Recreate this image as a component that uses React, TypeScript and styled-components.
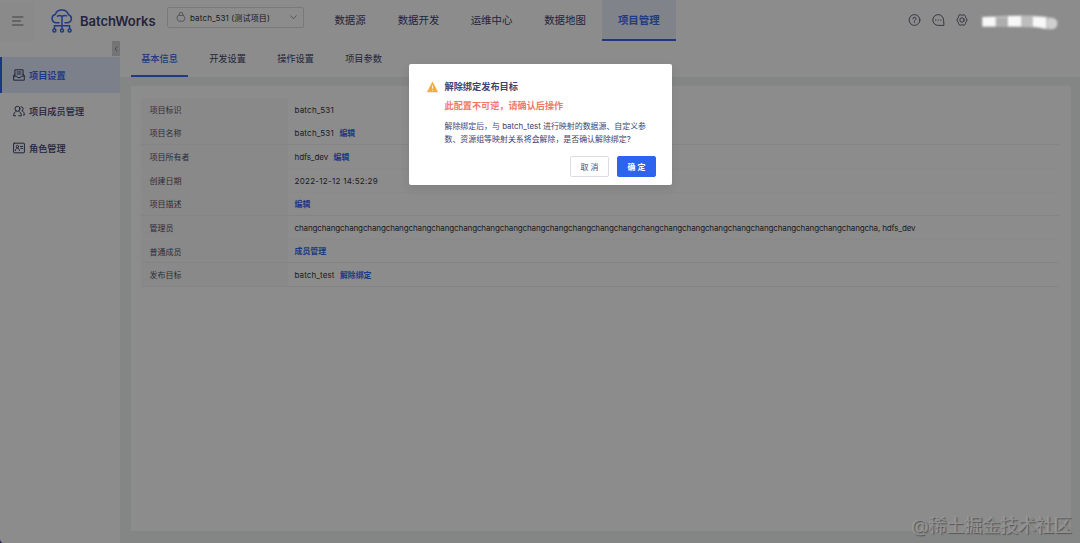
import React from 'react';
import styled, { createGlobalStyle, css } from 'styled-components';

const Global = createGlobalStyle`
  * { box-sizing: border-box; }
  html, body, #root { margin: 0; height: 100%; }
  body { overflow: hidden; font-family: Inter, "Noto Sans CJK SC", sans-serif; font-size: 8px; color: #3d4370; background: #fff; }
`;

const Page = styled.div`
  height: 543px;
  width: 1080px;
  display: flex;
  flex-direction: column;
`;
const Header = styled.header`
  height: 41px;
  flex: none;
  display: flex;
  align-items: center;
  background: #fff;
`;
const MenuToggle = styled.div`
  width: 35px;
  height: 40px;
  display: flex;
  align-items: center;
  justify-content: center;
  background: #fbfbfb;
`;
const Brand = styled.div`
  display: flex;
  align-items: center;
  width: 132px;
  padding-left: 16px;
  gap: 7px;
  font-size: 13px;
  font-weight: 600;
  letter-spacing: -0.03px;
  color: #3d446e;
  white-space: nowrap;
`;
const Picker = styled.div`
  width: 137px;
  height: 21px;
  margin-top: -7px;
  display: flex;
  align-items: center;
  gap: 4px;
  padding: 0 6px 0 8px;
  border: 1px solid #dadde3;
  border-radius: 2px;
  font-size: 8px;
  letter-spacing: 0.14px;
  color: #333;
  white-space: nowrap;
  svg:last-child { margin-left: auto; }
`;
const Nav = styled.nav`
  display: flex;
  margin-left: 14px;
  height: 41px;
`;
const NavItem = styled.a<{ $w: number; $active?: boolean }>`
  width: ${p => p.$w}px;
  display: flex;
  align-items: center;
  justify-content: center;
  font-size: 10.4px;
  border-bottom: 2px solid transparent;
  ${p => p.$active && css`
    color: #3b6cf0;
    font-weight: 600;
    background: #eceefb;
    border-color: #3964e0;
  `}
`;
const Tools = styled.div`
  margin-left: auto;
  display: flex;
  align-items: center;
  gap: 11px;
  padding-right: 22px;
  color: #3d4055;
`;
const Body = styled.div`
  flex: 1;
  display: flex;
  min-height: 0;
`;
const Side = styled.aside`
  width: 120px;
  padding-top: 15.5px;
  background: #fff;
  display: flex;
  flex-direction: column;
  position: relative;
`;
const SideItem = styled.a<{ $active?: boolean }>`
  height: 36.5px;
  display: flex;
  align-items: center;
  gap: 4px;
  padding-left: 11px;
  font-size: 9.2px;
  font-weight: 500;
  border-left: 2px solid transparent;
  svg { color: #3d446e; }
  ${p => p.$active && css`
    color: #3b6cf0;
    font-weight: 600;
    background: #e2eafb;
    border-color: #2e62ee;
  `}
`;
const Collapse = styled.div`
  position: absolute;
  right: 0;
  top: 0;
  width: 8px;
  height: 15px;
  display: flex;
  align-items: center;
  justify-content: center;
  background: #d3d4d7;
`;
const Main = styled.main`
  flex: 1;
  display: flex;
  flex-direction: column;
  background: #f0f4f5;
`;
const Tabs = styled.div`
  height: 36px;
  display: flex;
  gap: 11px;
  padding-left: 11px;
  background: #fff;
`;
const Tab = styled.a<{ $active?: boolean }>`
  width: 57px;
  display: flex;
  align-items: center;
  justify-content: center;
  font-size: 9.2px;
  border-bottom: 2px solid transparent;
  ${p => p.$active && css`
    color: #3b6cf0;
    font-weight: 500;
    border-color: #3b6cf0;
  `}
`;
const Card = styled.section`
  flex: 1;
  margin: 9px 9px 12px 11px;
  padding: 12px 12px 0 10px;
  background: #fff;
`;
const Row = styled.div<{ $faint?: boolean }>`
  display: flex;
  height: 23.65px;
  border-bottom: 1px solid ${p => (p.$faint ? '#fcfcfd' : '#eff0f2')};
`;
const Label = styled.div`
  width: 147px;
  padding-left: 8.5px;
  display: flex;
  align-items: center;
  background: #fafafb;
  color: #4e5365;
`;
const Value = styled.div`
  display: flex;
  align-items: center;
  gap: 5.5px;
  padding: 1px 0 0 6.5px;
  letter-spacing: 0.12px;
  color: #333641;
  white-space: nowrap;
`;
const Text = styled.span<{ $spacing: number }>`
  letter-spacing: ${p => p.$spacing}px;
`;
const Link = styled.a`
  margin-bottom: 2px;
  color: #3868ef;
  letter-spacing: 0;
  font-size: 7.9px;
  font-weight: 600;
`;
const Mask = styled.div`
  position: absolute;
  inset: 0;
  background: rgba(0, 0, 0, 0.45);
`;
const Dialog = styled.div`
  position: absolute;
  left: 409px;
  top: 64px;
  width: 263px;
  height: 121px;
  padding: 16px 16px 0 18px;
  display: flex;
  gap: 6.5px;
  background: #fff;
  border-radius: 2px;
  box-shadow: 0 3px 10px rgba(0, 0, 0, 0.1);
  > svg { flex: none; margin-top: 1px; }
`;
const DialogBody = styled.div`
  flex: 1;
`;
const Title = styled.div`
  font-size: 9.2px;
  line-height: 14px;
  font-weight: 600;
`;
const Warning = styled.div`
  margin-top: 5px;
  font-size: 9.15px;
  line-height: 14px;
  font-weight: 600;
  color: #f07868;
`;
const Detail = styled.div`
  margin-top: 7px;
  line-height: 13px;
  font-size: 7.93px;
  white-space: nowrap;
`;
const Actions = styled.div`
  margin-top: 10px;
  display: flex;
  justify-content: flex-end;
  gap: 8px;
`;
const Button = styled.button<{ $primary?: boolean }>`
  width: 39px;
  height: 21px;
  padding: 0;
  font: inherit;
  border-radius: 2px;
  border: 1px solid ${p => (p.$primary ? '#2d63ee' : '#dcdde2')};
  background: ${p => (p.$primary ? '#2d63ee' : '#fff')};
  color: ${p => (p.$primary ? '#fff' : '#4c4e63')};
  font-weight: ${p => (p.$primary ? 600 : 400)};
`;
const Redacted = styled.svg`
  position: absolute;
  left: 978px;
  top: 12px;
`;
const Watermark = styled.div`
  position: absolute;
  right: 8px;
  bottom: 4px;
  font-size: 17.9px;
  line-height: 26px;
  color: #8f8f8f;
  text-shadow: 1px 1px 1px #555, -0.5px -0.5px 0 #a8a8a8;
  white-space: nowrap;
`;
const Corner = styled.svg`
  position: absolute;
  left: 0;
  bottom: 0;
`;

const line = { fill: 'none', stroke: 'currentColor', strokeLinecap: 'round' as const, strokeLinejoin: 'round' as const };

const Logo = () => (
  <svg width="22" height="24" viewBox="0 0 22 24" {...line} stroke="#3b6cf0" strokeWidth="1.5">
    <path d="M8 13.7H5.2A4.2 4.2 0 0 1 4.4 5.4C5.2 2.5 7.7.9 10.7.9c3.4 0 6 1.9 6.8 4.8a4.1 4.1 0 0 1-.8 8H14M6.5 7.2C8.3 5.7 9.2 7 11 7s2.6-1.2 4.5-.2M11 7.5v12M3.4 20v-3.2h15.2V20" />
    <circle cx="3.4" cy="21.4" r="1.5" /><circle cx="11" cy="21.4" r="1.5" /><circle cx="18.6" cy="21.4" r="1.5" />
  </svg>
);

type Item = { label: string; text?: string; action?: string; spacing?: number; faint?: boolean };
const rows: Item[] = [
  { label: '项目标识', text: 'batch_531', spacing: 0.2, faint: true },
  { label: '项目名称', text: 'batch_531', action: '编辑', spacing: 0.2 },
  { label: '项目所有者', text: 'hdfs_dev', action: '编辑', spacing: -0.08, faint: true },
  { label: '创建日期', text: '2022-12-12 14:52:29', spacing: 0.28, faint: true },
  { label: '项目描述', action: '编辑' },
  { label: '管理员', text: 'chang'.repeat(25) + 'cha, hdfs_dev', spacing: -0.125, faint: true },
  { label: '普通成员', action: '成员管理' },
  { label: '发布目标', text: 'batch_test', action: '解除绑定', spacing: 0.09 },
];

export default function App() {
  return (
    <>
      <Global />
      <Page>
        <Header>
          <MenuToggle>
            <svg width="12" height="10" viewBox="0 0 12 10" {...line} stroke="#777" strokeWidth="1"><path d="M.5 1h10.5M.5 5h8M.5 9h10.5" /></svg>
          </MenuToggle>
          <Brand><Logo />BatchWorks</Brand>
          <Picker>
            <svg width="10" height="10" viewBox="0 0 10 10" {...line} stroke="#888" strokeWidth=".8"><path d="M3.2 3.2V2a1.8 1.8 0 0 1 3.6 0v1.2M2.5 3.4h5L9 6.2 7.5 9.2h-5L1 6.2z" /></svg>
            batch_531 (测试项目)
            <svg width="7" height="5" viewBox="0 0 7 5" {...line} stroke="#888" strokeWidth=".8"><path d="m.7.8 2.8 3 2.8-3" /></svg>
          </Picker>
          <Nav>
            <NavItem $w={64}>数据源</NavItem>
            <NavItem $w={73}>数据开发</NavItem>
            <NavItem $w={73}>运维中心</NavItem>
            <NavItem $w={74}>数据地图</NavItem>
            <NavItem $w={73.5} $active>项目管理</NavItem>
          </Nav>
          <Tools>
            <svg width="13" height="13" viewBox="0 0 13 13" {...line} strokeWidth=".8"><circle cx="6.5" cy="6" r="5.4" /><path d="M5 4.8a1.5 1.5 0 1 1 2.2 1.3c-.5.3-.7.6-.7 1.1M6.5 8.5v.2" /></svg>
            <svg width="13" height="13" viewBox="0 0 13 13" {...line} strokeWidth=".8"><path d="M11.6 11.4H6.2A5.4 5.4 0 1 1 11.6 6z" /><path strokeWidth="1.2" d="M3.7 6h.1M6.2 6h.1M8.7 6h.1" /></svg>
            <svg width="13" height="13" viewBox="0 0 13 13" {...line} strokeWidth=".8"><path d="M3.6.8h1.2l1.2.6 1.2-.6h1.2l1.1 1.8.2 1.3 1.2 1.1v2L9.7 8.1l-.2 1.3-1.1 1.8H7.2L6 10.6l-1.2.6H3.6L2.5 9.4l-.2-1.3L1.1 7V5l1.2-1.1.2-1.3z" /><circle cx="6" cy="6" r="2.2" /></svg>
            <svg width="78" height="18" />
          </Tools>
        </Header>
        <Body>
          <Side>
            <Collapse><svg width="4" height="6" viewBox="0 0 4 6" {...line} stroke="#777" strokeWidth=".8"><path d="M3 1 1 3l2 2" /></svg></Collapse>
            <SideItem $active>
              <svg width="12" height="12" viewBox="0 0 12 12" {...line} strokeWidth="1"><path d="M1.9 6.5V.8h8.2v5.7M1.9 5 .7 6.5v4.7h10.6V6.5L10.1 5M.7 7.2h3l.9 1.4h2.8l.9-1.4h3M4 3h4M4 5h4" /></svg>
              项目设置
            </SideItem>
            <SideItem>
              <svg width="12" height="12" viewBox="0 0 12 12" {...line} strokeWidth="1"><circle cx="4.5" cy="3.8" r="2.5" /><path d="M3.2 6.2C1.8 6.8.6 8.4.6 10.8h2M5.8 6.2c1.4.6 2.6 2.2 2.6 4.6H5.8M8 1.8a2 2 0 0 1 .8 3.9c1.6.6 2.5 2 2.6 4.3h-1" /></svg>
              项目成员管理
            </SideItem>
            <SideItem>
              <svg width="12" height="12" viewBox="0 0 12 12" {...line} strokeWidth="1"><rect x=".6" y="1.2" width="10.8" height="9.6" rx=".6" /><circle cx="4.4" cy="4.6" r="1.2" /><path d="M2.4 8.6c.1-1.6.9-2.5 2-2.5s1.9.9 2 2.5M7.4 4.4h2.2M7.8 6.4h1.8" /></svg>
              角色管理
            </SideItem>
          </Side>
          <Main>
            <Tabs>
              <Tab $active>基本信息</Tab>
              <Tab>开发设置</Tab>
              <Tab>操作设置</Tab>
              <Tab>项目参数</Tab>
            </Tabs>
            <Card>
              {rows.map(r => (
                <Row key={r.label} $faint={r.faint}>
                  <Label>{r.label}</Label>
                  <Value>
                    {r.text && <Text $spacing={r.spacing ?? 0}>{r.text}</Text>}
                    {r.action && <Link>{r.action}</Link>}
                  </Value>
                </Row>
              ))}
            </Card>
          </Main>
        </Body>
      </Page>
      <Mask />
      <Redacted width="84" height="20" viewBox="0 0 84 20">
        <defs><filter id="soft" x="-10%" y="-30%" width="120%" height="160%"><feGaussianBlur stdDeviation=".9" /></filter></defs>
        <g filter="url(#soft)">
          <path d="M4 5Q20 3.500 50 3.500 64 3.500 73 5.500A6 6 0 0 1 73 17.500Q66 17.500 60 15.500L30 14.500 4 14.500z" fill="#bdbdbd" />
          <path d="M4.500 5h13v9.500h-13zM30 4h13v10.500H30zM55 4.500l13 1v11l-13-2z" fill="#f8f8f8" />
          <path d="M18 6h12v7.500H18z" fill="#adadad" />
          <circle cx="74" cy="11.500" r="5.500" fill="#cfcfcf" />
        </g>
      </Redacted>
      <Dialog>
        <svg width="11" height="12" viewBox="0 0 11 12"><path d="M5.5.8 10.8 11H.2z" fill="#f3ad3d" stroke="#f3ad3d" strokeWidth=".4" strokeLinejoin="round" /><path d="M5.5 4.5v3M5.5 8.8v.8" stroke="#fff" strokeWidth="1" /></svg>
        <DialogBody>
          <Title>解除绑定发布目标</Title>
          <Warning>此配置不可逆，请确认后操作</Warning>
          <Detail>解除绑定后，与 batch_test 进行映射的数据源、自定义参<br />数、资源组等映射关系将会解除，是否确认解除绑定?</Detail>
          <Actions>
            <Button>取 消</Button>
            <Button $primary>确 定</Button>
          </Actions>
        </DialogBody>
      </Dialog>
      <Watermark>@稀土掘金技术社区</Watermark>
      <Corner width="3" height="4" viewBox="0 0 3 4"><path d="M0 0c0 2 1 4 3 4H0z" fill="#1d1450" /></Corner>
    </>
  );
}
